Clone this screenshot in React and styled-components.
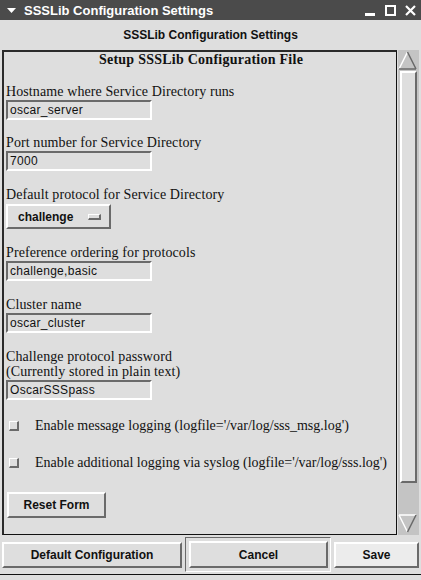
import React from 'react'
import styled, { createGlobalStyle } from 'styled-components'

const GlobalStyle = createGlobalStyle`
  html, body { margin: 0; padding: 0; background: #dedede; }
  * { box-sizing: border-box; }
`

const Window = styled.div`
  width: 421px;
  height: 580px;
  background: #dedede;
  display: flex;
  flex-direction: column;
  overflow: hidden;
`

const TitleBar = styled.div`
  height: 20px;
  background: #4b4b4b;
  color: #fff;
  display: flex;
  align-items: center;
  padding: 0 5px 0 7px;
  font-family: "Liberation Sans", sans-serif;
  font-weight: bold;
  font-size: 13px;
  span { margin-left: 8px; flex: 1; }
`

const WinButtons = styled.div`
  display: flex;
  gap: 9px;
  align-items: center;
`

const Header = styled.div`
  height: 30px;
  display: flex;
  align-items: center;
  justify-content: center;
  font-family: "Liberation Sans", sans-serif;
  font-weight: bold;
  font-size: 12px;
  color: #111;
`

const FrameRow = styled.div`
  display: flex;
  height: 485px;
  padding: 0 2px 0 2px;
`

const Content = styled.div`
  flex: 1;
  border-top: 2px solid #2a2a2a;
  border-left: 2px solid #2a2a2a;
  border-right: 1px solid #111;
  border-bottom: 1px solid #111;
  display: flex;
  flex-direction: column;
  padding: 0 0 0 2px;
  overflow: hidden;
`

const Heading = styled.div`
  font-family: "Liberation Serif", serif;
  font-weight: bold;
  font-size: 14px;
  line-height: 16px;
  text-align: center;
  color: #111;
  margin-bottom: 15px;
  letter-spacing: 0.25px;
`

const Field = styled.div`
  display: flex;
  flex-direction: column;
  margin-bottom: ${p => p.$gap ?? 14}px;
`

const Label = styled.div`
  font-family: "Liberation Serif", serif;
  font-size: 14px;
  line-height: 15px;
  color: #111;
  margin-top: 1px;
  margin-bottom: 1px;
  letter-spacing: 0.1px;
`

const Entry = styled.div`
  width: 146px;
  height: 20px;
  border-style: solid;
  border-width: 2px;
  border-color: #6a6a6a #fff #fff #6a6a6a;
  font-family: "Liberation Sans", sans-serif;
  font-size: 12px;
  line-height: 16px;
  padding-left: 2px;
  letter-spacing: 0.3px;
  color: #111;
`

const OptionButton = styled.div`
  width: 105px;
  height: 25px;
  margin-top: 1px;
  border-style: solid;
  border-width: 2px;
  border-color: #fff #6a6a6a #6a6a6a #fff;
  display: flex;
  align-items: center;
  padding: 0 8px 0 10px;
  justify-content: space-between;
  font-family: "Liberation Sans", sans-serif;
  font-weight: bold;
  font-size: 12px;
  color: #111;
`

const Indicator = styled.div`
  width: 13px;
  height: 6px;
  border-style: solid;
  border-width: 1px 2px 2px 1px;
  border-color: #fff #6a6a6a #6a6a6a #fff;
`

const CheckRow = styled.div`
  display: flex;
  align-items: center;
  height: 20px;
  margin-top: ${p => p.$top}px;
  font-family: "Liberation Serif", serif;
  font-size: 14px;
  color: #111;
`

const Box = styled.div`
  width: 10px;
  height: 10px;
  margin: 0 16px 0 3px;
  border-style: solid;
  border-width: 1px 2px 2px 1px;
  border-color: #fff #6a6a6a #6a6a6a #fff;
`

const Button = styled.div`
  height: ${p => p.$h || 26}px;
  width: ${p => (p.$w ? p.$w + 'px' : 'auto')};
  flex: ${p => (p.$w ? 'none' : '1')};
  background: ${p => (p.$active ? '#ececec' : '#dedede')};
  border-style: solid;
  border-width: 2px;
  border-color: #fff #6a6a6a #6a6a6a #fff;
  display: flex;
  align-items: center;
  justify-content: center;
  font-family: "Liberation Sans", sans-serif;
  font-weight: bold;
  font-size: 12px;
  color: #111;
`

const ResetButton = styled(Button)`
  margin-top: 19px;
  margin-left: 1px;
`

const DefaultRing = styled.div`
  width: 146px;
  height: 35px;
  border-style: solid;
  border-width: 1px;
  border-color: #6a6a6a #fff #fff #6a6a6a;
  padding: 3px 2px 3px 3px;
  display: flex;
`

const Scrollbar = styled.div`
  width: 21px;
  display: flex;
  flex-direction: column;
  background: #c4c4c4;
  margin-left: 1px;
  padding: 1px 2px 2px 0;
`

const Arrow = styled.svg`
  display: block;
  width: 19px;
  height: 19px;
  flex: none;
`

const Slider = styled.div`
  height: 412px;
  margin: 1px 0 0 2px;
  border-style: solid;
  border-width: 2px;
  border-color: #fff #6a6a6a #6a6a6a #fff;
  background: #dedede;
`

const Trough = styled.div`
  flex: 1;
`

const ButtonRow = styled.div`
  display: flex;
  align-items: center;
  height: 40px;
  padding: 0 2px 0 2px;
  gap: 3px;
  border-bottom: 1px solid #111;
`

export default function App() {
  return (
    <>
      <GlobalStyle />
      <Window>
        <TitleBar>
          <svg width="9" height="5" viewBox="0 0 9 5"><path d="M0 0h9L4.5 5z" fill="#fff" /></svg>
          <span>SSSLib Configuration Settings</span>
          <WinButtons>
            <svg width="11" height="11" viewBox="0 0 11 11"><rect x="0" y="8" width="10" height="3" fill="#fff" /></svg>
            <svg width="11" height="11" viewBox="0 0 11 11"><rect x="1" y="1" width="9" height="9" fill="none" stroke="#fff" strokeWidth="2" /></svg>
            <svg width="11" height="11" viewBox="0 0 11 11"><path d="M1 1l9 9M10 1l-9 9" stroke="#fff" strokeWidth="2.2" /></svg>
          </WinButtons>
        </TitleBar>
        <Header>SSSLib Configuration Settings</Header>
        <FrameRow>
          <Content>
            <Heading>Setup SSSLib Configuration File</Heading>
            <Field>
              <Label>Hostname where Service Directory runs</Label>
              <Entry>oscar_server</Entry>
            </Field>
            <Field $gap={15}>
              <Label>Port number for Service Directory</Label>
              <Entry>7000</Entry>
            </Field>
            <Field $gap={15}>
              <Label>Default protocol for Service Directory</Label>
              <OptionButton>challenge<Indicator /></OptionButton>
            </Field>
            <Field $gap={15}>
              <Label>Preference ordering for protocols</Label>
              <Entry>challenge,basic</Entry>
            </Field>
            <Field $gap={15}>
              <Label>Cluster name</Label>
              <Entry>oscar_cluster</Entry>
            </Field>
            <Field $gap={0}>
              <Label>Challenge protocol password<br />(Currently stored in plain text)</Label>
              <Entry>OscarSSSpass</Entry>
            </Field>
            <CheckRow $top={16}><Box />Enable message logging (logfile='/var/log/sss_msg.log')</CheckRow>
            <CheckRow $top={17}><Box />Enable additional logging via syslog (logfile='/var/log/sss.log')</CheckRow>
            <ResetButton $w={99}>Reset Form</ResetButton>
          </Content>
          <Scrollbar>
            <Arrow viewBox="0 0 19 19">
              <path d="M9.5 1L1 18" stroke="#fff" strokeWidth="1.5" />
              <path d="M9.5 1L18 18M1 18h17" stroke="#6a6a6a" strokeWidth="1.5" />
            </Arrow>
            <Slider />
            <Trough />
            <Arrow viewBox="0 0 19 19">
              <path d="M1 1h17M1 1l8.5 17" stroke="#fff" strokeWidth="1.5" />
              <path d="M18 1L9.5 18" stroke="#6a6a6a" strokeWidth="1.5" />
            </Arrow>
          </Scrollbar>
        </FrameRow>
        <ButtonRow>
          <Button $w={180}>Default Configuration</Button>
          <DefaultRing><Button $h={27}>Cancel</Button></DefaultRing>
          <Button $active>Save</Button>
        </ButtonRow>
      </Window>
    </>
  )
}
